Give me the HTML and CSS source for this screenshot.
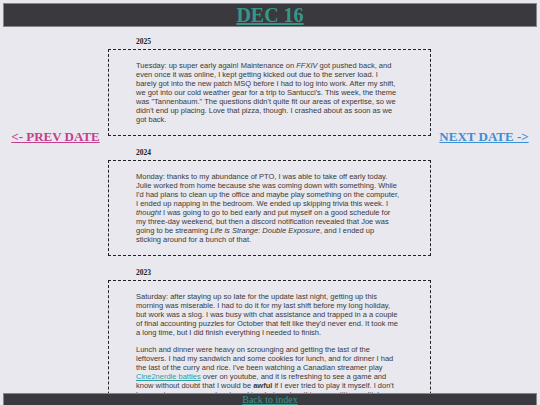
FILE: index.html
```html
<!DOCTYPE html>
<html lang="en">
  <head>
    <meta charset="UTF-8" />
    <meta name="viewport" content="width=device-width, initial-scale=1.0" />
    <title>Dec 16</title>
    <link rel="stylesheet" href="styles.css">
  </head>
  <body>
    <header class="topbar">
      <h1><a href="#">DEC 16</a></h1>
    </header>

    <div class="layout">
      <nav class="side">
        <a class="prev" href="#">&lt;- PREV DATE</a>
      </nav>

      <main class="entries">
        <section class="entry">
          <h2 class="year">2025</h2>
          <div class="entry-body">
            <p>Tuesday: up super early again! Maintenance on <em>FFXIV</em> got pushed back, and even once it was online, I kept getting kicked out due to the server load. I barely got into the new patch MSQ before I had to log into work. After my shift, we got into our cold weather gear for a trip to Santucci's. This week, the theme was "Tannenbaum." The questions didn't quite fit our areas of expertise, so we didn't end up placing. Love that pizza, though. I crashed about as soon as we got back.</p>
          </div>
        </section>

        <section class="entry">
          <h2 class="year">2024</h2>
          <div class="entry-body">
            <p>Monday: thanks to my abundance of PTO, I was able to take off early today. Julie worked from home because she was coming down with something. While I'd had plans to clean up the office and maybe play something on the computer, I ended up napping in the bedroom. We ended up skipping trivia this week. I <em>thought</em> I was going to go to bed early and put myself on a good schedule for my three-day weekend, but then a discord notification revealed that Joe was going to be streaming <em>Life is Strange: Double Exposure</em>, and I ended up sticking around for a bunch of that.</p>
          </div>
        </section>

        <section class="entry">
          <h2 class="year">2023</h2>
          <div class="entry-body">
            <p>Saturday: after staying up so late for the update last night, getting up this morning was miserable. I had to do it for my last shift before my long holiday, but work was a slog. I was busy with chat assistance and trapped in a a couple of final accounting puzzles for October that felt like they'd never end. It took me a long time, but I did finish everything I needed to finish.</p>
            <p>Lunch and dinner were heavy on scrounging and getting the last of the leftovers. I had my sandwich and some cookies for lunch, and for dinner I had the last of the curry and rice. I've been watching a Canadian streamer play <a href="#">Cine2nerdle battles</a> over on youtube, and it is refreshing to see a game and know without doubt that I would be <strong>awful</strong> if I ever tried to play it myself. I don't know actor names, or who starred in what, and so this competitive multiplayer game would be a nightmare for me.</p>
          </div>
        </section>
      </main>

      <nav class="side">
        <a class="next" href="#">NEXT DATE -&gt;</a>
      </nav>
    </div>

    <footer class="bottombar">
      <a href="#">Back to index</a>
    </footer>
  </body>
</html>
```

FILE: styles.css
```css
body {
  margin: 3px;
  background-color: #e9e8ee;
  font-family: "Liberation Serif", "Times New Roman", serif;
  color: #333;
}

.topbar {
  background-color: #3a393e;
  border: 1px solid #85858a;
  text-align: center;
}

.topbar h1 {
  margin: 0;
  font-size: 20px;
  line-height: 22px;
}

.topbar a,
.bottombar a {
  color: #35978a;
}

.layout {
  display: grid;
  grid-template-columns: 105px 323px 1fr;
}

.side {
  text-align: center;
  padding-top: 100px;
}

.side a {
  font-size: 13px;
  font-weight: bold;
  line-height: 15px;
}

.prev {
  color: #c4408c;
}

.next {
  color: #3b8fd4;
}

.entries {
  padding-top: 10px;
  padding-bottom: 20px;
}

.year {
  margin: 0 0 3px 28px;
  font-size: 7.5px;
  line-height: 9px;
  color: #222;
}

.entry {
  margin-bottom: 12px;
}

.entry-body {
  border: 1px dashed #222;
  padding: 3px 30px 3px 27px;
  font-family: "Liberation Sans", Arial, sans-serif;
  font-size: 7.5px;
  line-height: 9px;
  color: #3a3a3a;
}

.entry-body p {
  margin: 8px 0;
}

.entry-body a {
  color: #2f9ea0;
}

.bottombar {
  position: fixed;
  left: 3px;
  right: 3px;
  bottom: 0;
  background-color: #3a393e;
  border: 1px solid #85858a;
  border-bottom: none;
  text-align: center;
  font-size: 10px;
  line-height: 11px;
}
```
